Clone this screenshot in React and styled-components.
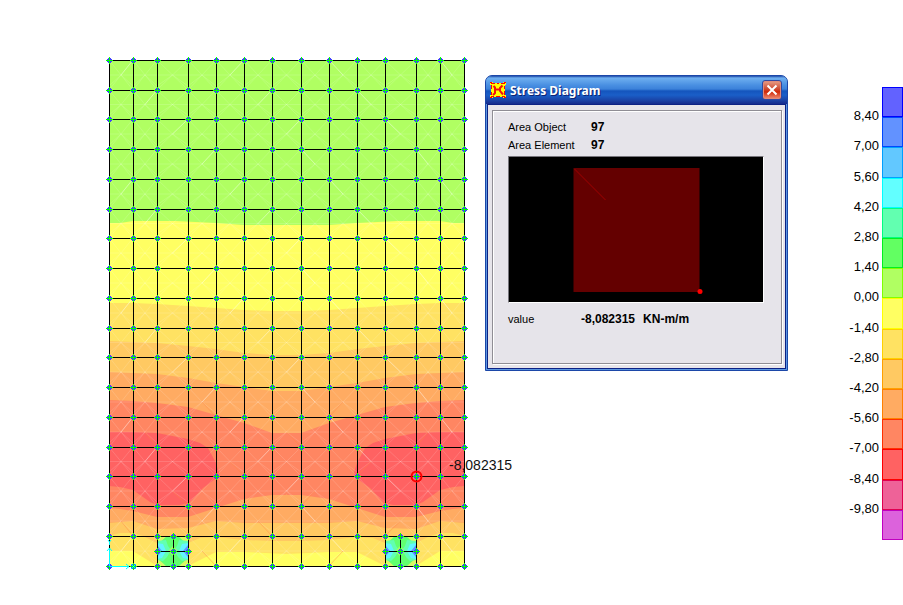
import styled, { createGlobalStyle } from "styled-components";

const GlobalStyle = createGlobalStyle`
  * {
    box-sizing: border-box;
  }

  body {
    margin: 0;
    background: #fff;
    color: #000;
    font-family: "Liberation Sans", Arial, sans-serif;
  }
`;

const Page = styled.main`
  display: flex;
  align-items: flex-start;
  min-height: 100vh;
  padding: 50px 0 0 100px;
`;

const Plot = styled.svg`
  flex: none;
  width: 375px;
  height: 530px;
  overflow: visible;
`;

const NodeLabel = styled.text`
  font-size: 14px;
  fill: #111;
`;

const Dialog = styled.section`
  flex: none;
  width: 303px;
  margin: 25px 0 0 10px;
  border: 1px solid #1c47a8;
  border-radius: 7px 7px 0 0;
  background: #5b97e0;
  overflow: hidden;
`;

const TitleBar = styled.header`
  display: flex;
  align-items: center;
  gap: 4px;
  height: 28px;
  padding: 0 5px 0 4px;
  background: linear-gradient(
    #1c47a8 0,
    #6fb0f0 2px,
    #4a90e2 9px,
    #3c82da 13px,
    #1455bd 15px,
    #1a5fc8 19px,
    #1a44a8 24px,
    #142a8c 28px
  );
`;

const Title = styled.h1`
  flex: 1;
  margin: 0;
  padding-top: 2px;
  color: #fff;
  font: bold 12px/16px "Noto Sans", "Open Sans", sans-serif;
  text-shadow: 1px 1px #0c2373;
`;

const Logo = styled.svg`
  width: 16px;
  height: 16px;
`;

const CloseButton = styled.button`
  display: grid;
  place-items: center;
  width: 20px;
  height: 20px;
  padding: 0;
  border: 1px solid #3048a0;
  border-radius: 3px;
  background: linear-gradient(#e8a088, #d0523a 40%, #d02808 60%, #f09078);
  box-shadow: inset 0 0 0 1px #e08a78;
`;

const Body = styled.div`
  margin: 0 1px 1px;
  padding: 5px 3px 4px 4px;
  border: 1px solid #0c2184;
  background: #e6e4ea;
`;

const Panel = styled.div`
  padding: 7px 17px 35px 15px;
  border: 1px solid #8f8d94;
  box-shadow:
    inset 1px 1px #fff,
    1px 1px #fff;
`;

const Rows = styled.dl`
  margin: 0;
`;

const Row = styled.div`
  display: grid;
  grid-template-columns: ${(p) => (p.$wide ? 73 : 83)}px 1fr;
  align-items: center;
  height: 18px;
`;

const Term = styled.dt`
  font-size: 11px;
  line-height: 18px;
`;

const Value = styled.dd`
  display: flex;
  gap: 8px;
  margin: 0;
  font-size: 12px;
  font-weight: bold;
  line-height: 18px;
`;

const Viewport = styled.svg`
  display: block;
  width: 100%;
  height: 147px;
  margin: 2px 0 7px;
  border: 1px solid;
  border-color: #77757c #fff #fff #77757c;
  background: #000;
`;

const Legend = styled.aside`
  display: flex;
  gap: 3px;
  height: 453px;
  margin: 37px 0 0 auto;
`;

const Ticks = styled.ol`
  display: grid;
  grid-auto-rows: 1fr;
  align-items: center;
  margin: 0;
  padding: 14px 0 16px;
  list-style: none;
  font-size: 13px;
  line-height: 16px;
  text-align: right;
`;

const Scale = styled.div`
  display: grid;
  grid-auto-rows: 1fr;
  width: 21px;
`;

const Swatch = styled.div`
  border: 1px solid ${(p) => p.$line};
  background: ${(p) => p.$fill};
`;

const SCALE = [
  ["#6262ff", "#0000ff"],
  ["#6292ff", "#0048ff"],
  ["#62c8ff", "#00a0ff"],
  ["#62ffff", "#00ffff"],
  ["#62ffb0", "#00ff80"],
  ["#62ff62", "#00f020"],
  ["#b0ff62", "#80ff00"],
  ["#ffff62", "#ffff00"],
  ["#ffe262", "#ffd000"],
  ["#ffc962", "#ffa000"],
  ["#ffab62", "#ff8000"],
  ["#ff8662", "#ff3000"],
  ["#ff6262", "#ff0000"],
  ["#ee6298", "#e00050"],
  ["#dc62dc", "#c000c0"],
];

const TICKS = [
  "8,40", "7,00", "5,60", "4,20", "2,80", "1,40", "0,00",
  "-1,40", "-2,80", "-4,20", "-5,60", "-7,00", "-8,40", "-9,80",
];

const XS = [109, 133, 157, 188, 216, 244, 272, 301, 329, 357, 385, 416, 440, 464];
const YS = [60, 90, 119, 149, 179, 209, 238, 268, 298, 328, 357, 387, 417, 447, 476, 506, 536, 566];
const SUPPORTS = [
  { x: 157, mid: 173 },
  { x: 385, mid: 400 },
];

// upper edge of each band, left half only; everything below it gets the colour
const BANDS = [
  ["#ffff62", [[109, 223], [120, 223], [133, 221], [175, 221], [216, 223], [244, 225], [287, 225]]],
  ["#ffe262", [[109, 303], [133, 303], [157, 304], [188, 306], [216, 308], [244, 310], [272, 311], [287, 311]]],
  ["#ffc962", [[109, 341], [133, 342], [157, 343], [188, 346], [216, 349], [244, 353], [272, 355], [287, 355]]],
  ["#ffab62", [[109, 372], [133, 373], [157, 374], [188, 378], [216, 383], [244, 387], [272, 391], [287, 391]]],
  ["#ff8662", [[109, 400], [133, 401], [157, 403], [188, 407], [216, 415], [244, 423], [272, 433], [287, 433]]],
  ["#ffab62", [[109, 508], [120, 509], [133, 511], [157, 517], [188, 517], [216, 508], [244, 499], [272, 495], [287, 494]]],
  ["#ffc962", [[109, 523], [133, 521], [157, 529], [188, 528], [216, 521], [244, 523], [287, 523]]],
  ["#ffe262", [[109, 536], [120, 533], [133, 533], [143, 536], [157, 543], [188, 543], [200, 538], [216, 537], [244, 540], [272, 541], [287, 541]]],
  ["#ffff62", [[109, 551], [133, 551], [157, 566], [188, 566], [216, 552], [244, 552], [287, 554]]],
];

const PEAK = [
  [109, 432], [133, 432], [157, 433], [188, 439], [200, 443], [208, 448], [216, 463], [219, 473],
  [218, 477], [203, 488], [189, 503], [180, 505], [157, 505], [150, 502], [133, 490], [120, 487], [109, 486],
];

const AXIS = 573;
const mirror = (points) => points.map(([x, y]) => [AXIS - x, y]);
const toPoints = (points) => points.map((p) => p.join(",")).join(" ");

function Bands() {
  return (
    <g>
      <rect x="109" y="60" width="355" height="506" fill="#b0ff62" />
      {BANDS.map(([color, edge], i) => (
        <polygon
          key={i}
          fill={color}
          points={toPoints([...edge, ...mirror(edge).reverse(), [464, 566], [109, 566]])}
        />
      ))}
      <polygon fill="#ff6262" points={toPoints(PEAK)} />
      <polygon fill="#ff6262" points={toPoints(mirror(PEAK))} />
    </g>
  );
}

// faint triangulation that shows through the fill of every element
function Facets() {
  const lines = [];
  for (let i = 0; i < XS.length - 1; i++) {
    for (let j = 0; j < YS.length - 1; j++) {
      const [x1, x2, y1, y2] = [XS[i], XS[i + 1], YS[j], YS[j + 1]];
      const cx = (x1 + x2) / 2;
      const cy = (y1 + y2) / 2;
      const falling = i > 6;
      lines.push(
        <g key={`${i}-${j}`}>
          <path
            stroke="#fff"
            strokeOpacity="0.14"
            d={`M${x1} ${y1}L${x2} ${y2}M${x1} ${y2}L${x2} ${y1}M${x1} ${cy}H${x2}M${cx} ${cy}L${x1} ${y2 - 4}M${cx} ${cy}L${x2} ${y2 - 4}`}
          />
          {(i * 5 + j * 3) % 4 === 0 && (
            <path
              stroke="#fff"
              strokeOpacity="0.35"
              d={falling ? `M${x1} ${y1}L${cx} ${cy}` : `M${x2} ${y1}L${cx} ${cy}`}
            />
          )}
          {j > 10 && (i + j * 2) % 5 === 0 && (
            <path
              stroke="#ff5800"
              strokeOpacity="0.3"
              d={`M${cx} ${cy}L${falling ? x1 : x2} ${y2}`}
            />
          )}
        </g>
      );
    }
  }
  return <g>{lines}</g>;
}

function Support({ x, mid }) {
  const r = x + 31;
  return (
    <g>
      <rect x={x} y="536" width="31" height="30" fill="#62ff70" />
      <path d={`M${x} 536h10l-10 9zM${r} 536h-10l10 9zM${x} 566h9l-9-8zM${r} 566h-9l9-8z`} fill="#d8f868" />
      <path d={`M${x} 541l9-1 2 6 3 4-4 7-4 4-6-1z`} fill="#62ffb0" />
      <path d={`M${r} 541l-9-1-2 6-3 4 4 7 4 4 6-1z`} fill="#62ffb0" />
      <path d={`M${x} 543l6 1 3 7-4 7-5 1zM${r} 543l-6 1-3 7 4 7 5 1z`} fill="#62f4ff" />
      <path d={`M${x} 545l5 6-5 6zM${r} 545l-5 6 5 6z`} fill="#6292ff" />
      <path d={`M${mid - 5} 551l5-5 5 5-5 5z`} fill="#a0ff62" />
      <path d={`M${x} 551.5h31M${mid + 0.5} 536v30`} stroke="#000" />
    </g>
  );
}

function Node({ x, y }) {
  return (
    <g transform={`translate(${x} ${y})`} shapeRendering="crispEdges">
      <path d="M-1-2h3v1h1v3h-1v1h-3v-1h-1v-3h1z" fill="#4040ff" />
      <path d="M-3 .5h7M.5-3v7" stroke="#00ff00" />
    </g>
  );
}

function StressPlot() {
  return (
    <Plot viewBox="100 50 375 530" role="img" aria-label="Stress contours">
      <Bands />
      <Facets />
      {SUPPORTS.map((s) => (
        <Support key={s.x} {...s} />
      ))}
      <g stroke="#000" shapeRendering="crispEdges">
        {XS.map((x) => (
          <path key={x} d={`M${x + 0.5} 60V567`} />
        ))}
        {YS.map((y) => (
          <path key={y} d={`M109 ${y + 0.5}H465`} />
        ))}
      </g>
      {YS.map((y) => XS.map((x) => <Node key={`${x}-${y}`} x={x} y={y} />))}
      {SUPPORTS.map(({ x, mid }) =>
        [[mid, 536], [mid, 551], [mid, 566], [x, 551], [x + 31, 551]].map(([nx, ny]) => (
          <Node key={`${nx}-${ny}`} x={nx} y={ny} />
        ))
      )}
      <path
        d="M109.5 566V548M107 551l2.5-3 2.5 3M109.5 566.5H129M126 564l3 2.5-3 2.5M108 540l1.5 2 1.5-2M109.5 542v3M131 564l5 5M136 564l-5 5"
        fill="none"
        stroke="#00ffff"
      />
      <circle cx="416.5" cy="476.5" r="5" fill="none" stroke="#f00" strokeWidth="2" />
      <NodeLabel x="449" y="470">-8,082315</NodeLabel>
    </Plot>
  );
}

function StressDialog() {
  return (
    <Dialog role="dialog" aria-label="Stress Diagram">
      <TitleBar>
        <Logo viewBox="0 0 16 16" aria-hidden="true">
          <path d="M0 0h3v1h10V0h3v3h-1v10h1v3h-3v-1H3v1H0v-3h1V3H0z" fill="#ffff00" />
          <path
            d="M0 .5h2M1 1.5h4M14 .5h2M11 1.5h4M0 15.5h2M1 14.5h3M14 15.5h2M12 14.5h3M1.5 3v4M14.5 4v3M1.5 10v3M14.5 9v4M7 1.5h2M6 14.5h4"
            stroke="#f00"
          />
          <path d="M3.5 4l2 2M5 5v6l-2 2M12.500 3.500L10 6v3l3 3.500M6 7.500h4" fill="none" stroke="#f01010" strokeWidth="2" />
        </Logo>
        <Title>Stress Diagram</Title>
        <CloseButton type="button" aria-label="Close">
          <svg width="12" height="12" viewBox="0 0 12 12">
            <path d="M1.5 1.5l9 9M10.5 1.5l-9 9" stroke="#fff" strokeWidth="2" />
          </svg>
        </CloseButton>
      </TitleBar>
      <Body>
        <Panel>
          <Rows>
            <Row>
              <Term>Area Object</Term>
              <Value>97</Value>
            </Row>
            <Row>
              <Term>Area Element</Term>
              <Value>97</Value>
            </Row>
          </Rows>
          <Viewport viewBox="0 0 253 145" aria-hidden="true">
            <rect x="64" y="11" width="126" height="124" fill="#640000" />
            <path d="M65 12l31 31" stroke="#a00000" />
            <circle cx="190.5" cy="134.5" r="2.5" fill="#f00" />
          </Viewport>
          <Rows>
            <Row $wide>
              <Term>value</Term>
              <Value>
                <span>-8,082315</span>
                <span>KN-m/m</span>
              </Value>
            </Row>
          </Rows>
        </Panel>
      </Body>
    </Dialog>
  );
}

function App() {
  return (
    <>
      <GlobalStyle />
      <Page>
        <StressPlot />
        <StressDialog />
        <Legend aria-label="Legend">
          <Ticks>
            {TICKS.map((tick) => (
              <li key={tick}>{tick}</li>
            ))}
          </Ticks>
          <Scale>
            {SCALE.map(([fill, line]) => (
              <Swatch key={fill} $fill={fill} $line={line} />
            ))}
          </Scale>
        </Legend>
      </Page>
    </>
  );
}

export default App;
